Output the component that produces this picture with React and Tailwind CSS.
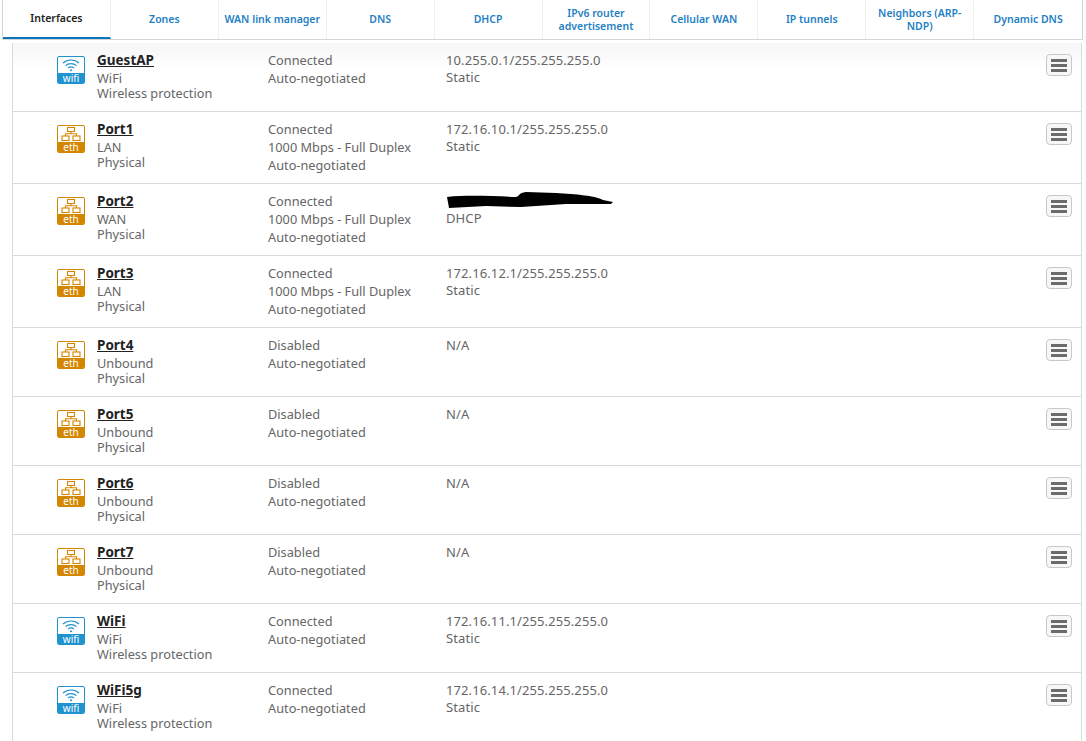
import React from "react";

const tabs = [
  "Interfaces",
  "Zones",
  "WAN link manager",
  "DNS",
  "DHCP",
  "IPv6 router advertisement",
  "Cellular WAN",
  "IP tunnels",
  "Neighbors (ARP-NDP)",
  "Dynamic DNS",
];

const rows = [
  { name: "GuestAP", kind: "wifi", type: "WiFi", sub: "Wireless protection", status: ["Connected", "Auto-negotiated"], ip: "10.255.0.1/255.255.255.0", mode: "Static" },
  { name: "Port1", kind: "eth", type: "LAN", sub: "Physical", status: ["Connected", "1000 Mbps - Full Duplex", "Auto-negotiated"], ip: "172.16.10.1/255.255.255.0", mode: "Static" },
  { name: "Port2", kind: "eth", type: "WAN", sub: "Physical", status: ["Connected", "1000 Mbps - Full Duplex", "Auto-negotiated"], redacted: true, mode: "DHCP" },
  { name: "Port3", kind: "eth", type: "LAN", sub: "Physical", status: ["Connected", "1000 Mbps - Full Duplex", "Auto-negotiated"], ip: "172.16.12.1/255.255.255.0", mode: "Static" },
  { name: "Port4", kind: "eth", type: "Unbound", sub: "Physical", status: ["Disabled", "Auto-negotiated"], ip: "N/A" },
  { name: "Port5", kind: "eth", type: "Unbound", sub: "Physical", status: ["Disabled", "Auto-negotiated"], ip: "N/A" },
  { name: "Port6", kind: "eth", type: "Unbound", sub: "Physical", status: ["Disabled", "Auto-negotiated"], ip: "N/A" },
  { name: "Port7", kind: "eth", type: "Unbound", sub: "Physical", status: ["Disabled", "Auto-negotiated"], ip: "N/A" },
  { name: "WiFi", kind: "wifi", type: "WiFi", sub: "Wireless protection", status: ["Connected", "Auto-negotiated"], ip: "172.16.11.1/255.255.255.0", mode: "Static" },
  { name: "WiFi5g", kind: "wifi", type: "WiFi", sub: "Wireless protection", status: ["Connected", "Auto-negotiated"], ip: "172.16.14.1/255.255.255.0", mode: "Static" },
];

function InterfaceIcon({ kind }) {
  const wifi = kind === "wifi";
  return (
    <div
      className={
        "flex h-7 w-7 shrink-0 flex-col overflow-hidden rounded-[2px] border " +
        (wifi ? "border-[#1f93cf] bg-white" : "border-[#d38600] bg-white")
      }
    >
      <div className="flex h-[17px] items-center justify-center">
        {wifi ? (
          <svg width="20" height="15" viewBox="0 0 20 15" fill="none" stroke="#1f93cf" strokeWidth="1.2">
            <path d="M2 5C6.5 1 13.5 1 18 5" />
            <path d="M4.5 7.6C7.5 5 12.5 5 15.5 7.6" />
            <path d="M7 10.1C8.7 8.7 11.3 8.7 13 10.1" />
            <circle cx="10" cy="12.2" r="1" fill="#1f93cf" stroke="none" />
          </svg>
        ) : (
          <svg width="22" height="16" viewBox="0 0 22 16" fill="none" stroke="#d38600" strokeWidth="1.1">
            <rect x="7.5" y="1.5" width="7" height="4" />
            <rect x="2" y="10" width="7" height="4.5" />
            <rect x="13" y="10" width="7" height="4.5" />
            <path d="M11 5.5V7.8M5.5 10V7.8H16.5V10" />
          </svg>
        )}
      </div>
      <div
        className={
          "flex flex-1 items-center justify-center text-[10px] leading-none text-white " +
          (wifi ? "bg-[#1f93cf]" : "bg-[#d38600]")
        }
      >
        {kind}
      </div>
    </div>
  );
}

function Row({ row, first }) {
  const tall = row.status.length === 3;
  return (
    <div
      className={
        "flex border-b border-[#d9d9d9] pl-[44px] pr-[9px] " +
        (tall ? "h-[72px] " : "h-[69px] ") +
        (first ? "bg-gradient-to-b from-[#f6f6f6] to-white to-40%" : "bg-white")
      }
    >
      <div className="mt-[13px]">
        <InterfaceIcon kind={row.kind} />
      </div>
      <div className="ml-[12px] w-[171px] pt-[9px] text-[12.75px] leading-[15px] text-[#666]">
        <div className="mb-[3px] text-[13.5px] font-bold leading-[16px] text-[#222] underline">{row.name}</div>
        <div>{row.type}</div>
        <div>{row.sub}</div>
      </div>
      <div className="w-[178px] pt-[8px] text-[12.75px] leading-[18px] text-[#666]">
        {row.status.map((s) => (
          <div key={s}>{s}</div>
        ))}
      </div>
      <div className="flex-1 pt-[9px] text-[13px] leading-[17px] tracking-[0.1px] text-[#666]">
        {row.redacted ? (
          <svg className="block overflow-visible" width="170" height="17" viewBox="0 0 170 17">
            <path
              d="M1 4C20 2 45 3 70 4C74 3 72 0 80 -1L110 0C130 1 150 3 157 7L167 9L165 11L120 11L75 14L40 13L3 15Z"
              fill="#000"
            />
          </svg>
        ) : (
          <div>{row.ip}</div>
        )}
        {row.mode && <div>{row.mode}</div>}
      </div>
      <div className="pt-[11px]">
        <button className="flex h-[22px] w-[26px] flex-col items-center justify-center gap-[2px] rounded-[4px] border border-[#c8c8c8] bg-[#f7f7f7]">
          <span className="h-[3px] w-[16px] bg-[#6b6b6b]" />
          <span className="h-[3px] w-[16px] bg-[#6b6b6b]" />
          <span className="h-[3px] w-[16px] bg-[#6b6b6b]" />
        </button>
      </div>
    </div>
  );
}

export default function App() {
  return (
    <div className="h-[741px] w-[1086px] overflow-hidden bg-white font-['Noto_Sans',sans-serif]">
      <div className="ml-[2px] flex h-[40px] w-[1081px] border-x border-b border-[#d5d5d5] bg-white">
        {tabs.map((tab, i) => (
          <div
            key={tab}
            className={
              "flex w-[108px] items-center justify-center border-r border-[#f0f0f0] px-[4px] text-center text-[10.5px] font-semibold leading-[13px] last:border-r-0 " +
              (i === 0 ? "border-b-2 border-b-[#0b76bd] text-[#222]" : "text-[#1f7fc4]")
            }
          >
            <span className={tab === "IPv6 router advertisement" || tab === "Neighbors (ARP-NDP)" ? "max-w-[90px]" : "whitespace-nowrap"}>
              {tab}
            </span>
          </div>
        ))}
      </div>
      <div className="ml-[12px] mt-[3px] w-[1070px] border-x border-[#d9d9d9]">
        {rows.map((row, i) => (
          <Row key={row.name} row={row} first={i === 0} />
        ))}
      </div>
    </div>
  );
}
